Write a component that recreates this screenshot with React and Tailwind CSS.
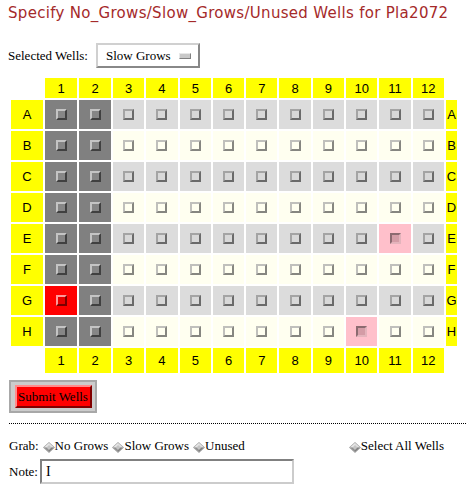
import React from "react";

const ROWS = ["A", "B", "C", "D", "E", "F", "G", "H"];
const COLS = [1, 2, 3, 4, 5, 6, 7, 8, 9, 10, 11, 12];

const serif = { fontFamily: '"Liberation Serif", "Times New Roman", serif' };
const sans = { fontFamily: '"Liberation Sans", Arial, sans-serif' };

function cellType(r, c) {
  if (r === "G" && c === 1) return "red";
  if ((r === "E" && c === 11) || (r === "H" && c === 10)) return "pink";
  if (c <= 2) return "dark";
  const i = ROWS.indexOf(r);
  return i % 2 === 0 ? "gray" : "ivory";
}

const cellBg = {
  red: "bg-[#ff0000]",
  pink: "bg-[#ffc0cb]",
  dark: "bg-[#808080]",
  gray: "bg-[#dcdcdc]",
  ivory: "bg-[#fffff0]",
};

const boxCls = {
  red: "border-t-[#ff9a9a] border-l-[#ff9a9a] border-b-[#7a0000] border-r-[#7a0000] bg-[#e80000]",
  pink: "border-t-[#8c6a70] border-l-[#8c6a70] border-b-[#e4b4bc] border-r-[#e4b4bc] bg-[#d49ca6]",
  dark: "border-t-[#c4c4c4] border-l-[#c4c4c4] border-b-[#404040] border-r-[#404040] bg-[#868686]",
  gray: "border-t-[#a4a4a4] border-l-[#a4a4a4] border-b-[#6a6a6a] border-r-[#6a6a6a] bg-[#d8d8d8]",
  ivory: "border-t-[#c0c0bc] border-l-[#c0c0bc] border-b-[#868680] border-r-[#868680] bg-[#fffff0]",
};

function Well({ r, c }) {
  const t = cellType(r, c);
  return (
    <div className={`${cellBg[t]} flex items-center justify-center`}>
      <div className={`w-[11px] h-[11px] border-2 box-border ${boxCls[t]}`} />
    </div>
  );
}

function Yellow({ children }) {
  return (
    <div
      className="bg-[#ffff00] flex items-center justify-center text-[13px] text-black leading-none"
      style={sans}
    >
      {children}
    </div>
  );
}

function Diamond() {
  return (
    <svg width="12" height="11" viewBox="0 0 12 11" className="inline-block shrink-0">
      <polygon points="6,0 12,5.5 6,11 0,5.5" fill="#a0a0a0" />
      <polygon points="6,1 11,5.5 6,10 1,5.5" fill="#c4c4c4" />
      <polygon points="6,1 1,5.5 3.5,5.5 6,3" fill="#e8e8e8" />
      <polygon points="6,1 11,5.5 8.5,5.5 6,3" fill="#e0e0e0" />
      <polygon points="6,10 1,5.5 3.5,5.5 6,8" fill="#909090" />
      <polygon points="6,10 11,5.5 8.5,5.5 6,8" fill="#808080" />
    </svg>
  );
}

function HeaderRow() {
  return (
    <>
      <div />
      {COLS.map((c) => (
        <Yellow key={c}>{c}</Yellow>
      ))}
      <div />
    </>
  );
}

export default function App() {
  return (
    <div className="w-[466px] h-[494px] bg-white overflow-hidden text-black">
      <div
        className="pl-[8px] pt-[4px] h-[24px] text-[15px] leading-[18px] tracking-[0.3px] text-[#a52a2a] whitespace-nowrap"
        style={{ fontFamily: '"DejaVu Sans", Verdana, sans-serif' }}
      >
        Specify No_Grows/Slow_Grows/Unused Wells for Pla2072
      </div>

      <div className="mt-[19px] h-[25px] flex items-center pl-[8px] text-[13px]" style={serif}>
        <span>Selected Wells:</span>
        <div className="ml-[8px] w-[104px] h-[25px] box-border border-2 border-t-[#d0d0d0] border-l-[#d0d0d0] border-b-[#888888] border-r-[#888888] bg-white flex items-center pl-[8px]">
          <span>Slow Grows</span>
          <div className="ml-[8px] w-[12px] h-[6px] box-border border border-t-[#e8e8e8] border-l-[#e8e8e8] border-b-[#808080] border-r-[#808080] bg-[#c8c8c8]" />
        </div>
      </div>

      <div className="mt-[10px] ml-[11px] w-[446px] grid grid-cols-[32px_32px_32px_repeat(10,1fr)_11px] grid-rows-[20px_repeat(8,29px)_25px] gap-[2px]">
        <HeaderRow />
        {ROWS.map((r) => (
          <React.Fragment key={r}>
            <Yellow>{r}</Yellow>
            {COLS.map((c) => (
              <Well key={c} r={r} c={c} />
            ))}
            <Yellow>{r}</Yellow>
          </React.Fragment>
        ))}
        <HeaderRow />
      </div>

      <div className="mt-[7px] ml-[9px] w-[88px] h-[33px] box-border border-2 border-[#a8a8a8] bg-[#cccccc] flex items-center justify-center">
        <div
          className="w-[77px] h-[23px] box-border border-2 border-t-[#ff8c8c] border-l-[#ff8c8c] border-b-[#800000] border-r-[#800000] bg-[#ff0000] flex items-center justify-center text-[13px] leading-none whitespace-nowrap"
          style={serif}
        >
          Submit Wells
        </div>
      </div>

      <div className="mt-[10px] ml-[9px] border-t border-dotted border-black" />

      <div className="mt-[14px] h-[16px] flex items-center pl-[9px] text-[13px] whitespace-nowrap" style={serif}>
        <span>Grab:</span>
        <span className="ml-[4px]"><Diamond /></span>
        <span>No Grows</span>
        <span className="ml-[4px]"><Diamond /></span>
        <span>Slow Grows</span>
        <span className="ml-[4px]"><Diamond /></span>
        <span>Unused</span>
        <span className="ml-[104px]"><Diamond /></span>
        <span>Select All Wells</span>
      </div>

      <div className="mt-[5px] flex items-center pl-[9px] text-[13px]" style={serif}>
        <span>Note:</span>
        <div className="ml-[2px] w-[254px] h-[25px] box-border border-2 border-t-[#808080] border-l-[#808080] border-b-[#cccccc] border-r-[#cccccc] bg-white flex items-center pl-[4px]">
          <span className="text-[14px] leading-none">I</span>
        </div>
      </div>
    </div>
  );
}
